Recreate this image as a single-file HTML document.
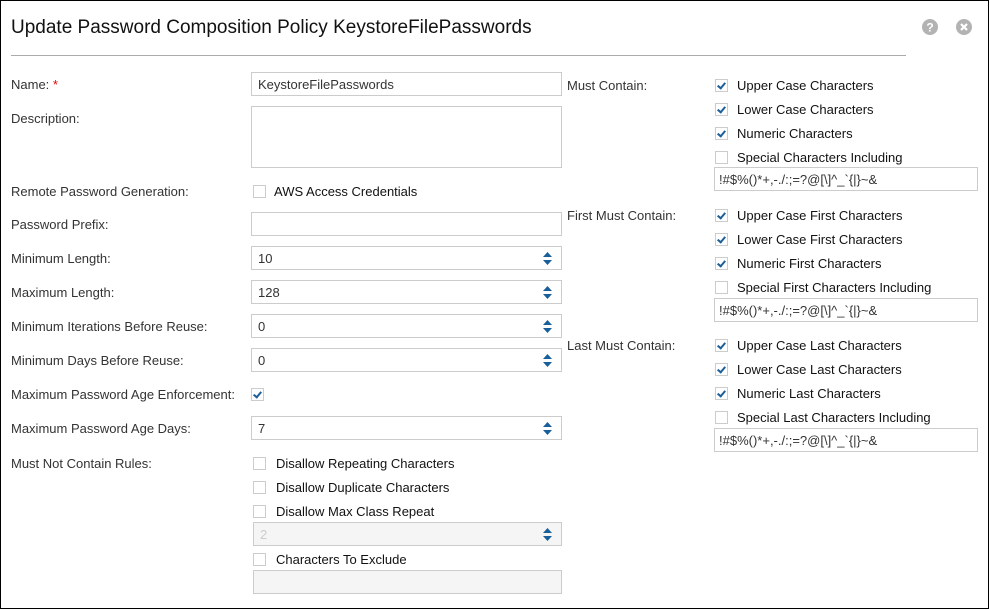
<!DOCTYPE html>
<html><head><meta charset="utf-8"><style>
*{box-sizing:border-box;margin:0;padding:0}
body{width:990px;height:610px;background:#fff;font-family:"Liberation Sans",Arial,sans-serif;font-size:13px;color:#333;position:relative;overflow:hidden}
.frame{position:absolute;left:0;top:0;width:989px;height:609px;border:1px solid #000}
.a{position:absolute}
.t{position:absolute;line-height:16px;height:16px;white-space:nowrap;font-size:13px;margin-top:1px}
.in{position:absolute;border:1px solid #ccc;background:#fff;height:24px;line-height:23px;padding-left:6px;font-size:13px;color:#333}
.cb{position:absolute;width:13px;height:13px;border:1px solid #ccc;background:#fff}
.cb.c::after{content:"";position:absolute;left:3px;top:1px;width:3px;height:6px;border:solid #1a5e9a;border-width:0 2px 2px 0;transform:rotate(40deg)}
.sp{position:absolute;right:9px;top:5px;width:9px;height:13px}
</style></head><body>
<div class="frame"></div>
<div class="t" style="left:11px;top:15px;height:24px;line-height:24px;font-size:19px;color:#111">Update Password Composition Policy KeystoreFilePasswords</div>
<div class="a" style="left:11px;top:55px;width:895px;height:1px;background:#aaa"></div>
<svg class="a" style="left:922px;top:19px" width="16" height="16"><circle cx="8" cy="8" r="8" fill="#b3b3b3"/><text x="8" y="12.5" text-anchor="middle" font-family="Liberation Sans" font-weight="bold" font-size="12" fill="#fff">?</text></svg>
<svg class="a" style="left:956px;top:19px" width="16" height="16"><circle cx="8" cy="8" r="8" fill="#b3b3b3"/><path d="M5 5L11 11M11 5L5 11" stroke="#fff" stroke-width="2.2"/></svg>

<div class="t" style="left:11px;top:76px">Name:<span style="color:#e00"> *</span></div>
<div class="in" style="left:251px;top:72px;width:311px">KeystoreFilePasswords</div>
<div class="t" style="left:11px;top:110px">Description:</div>
<div class="in" style="left:251px;top:106px;width:311px;height:62px"></div>
<div class="t" style="left:11px;top:183px">Remote Password Generation:</div>
<div class="cb" style="left:253px;top:185px"></div>
<div class="t" style="left:274px;top:183px;color:#111">AWS Access Credentials</div>
<div class="t" style="left:11px;top:216px">Password Prefix:</div>
<div class="in" style="left:251px;top:212px;width:311px"></div>

<div class="t" style="left:11px;top:250px">Minimum Length:</div>
<div class="in" style="left:251px;top:246px;width:311px">10<svg class="sp" viewBox="0 0 9 13"><path d="M4.5 0L9 5H0Z M0 8H9L4.5 13Z" fill="#1a5e9a"/></svg></div>
<div class="t" style="left:11px;top:284px">Maximum Length:</div>
<div class="in" style="left:251px;top:280px;width:311px">128<svg class="sp" viewBox="0 0 9 13"><path d="M4.5 0L9 5H0Z M0 8H9L4.5 13Z" fill="#1a5e9a"/></svg></div>
<div class="t" style="left:11px;top:318px">Minimum Iterations Before Reuse:</div>
<div class="in" style="left:251px;top:314px;width:311px">0<svg class="sp" viewBox="0 0 9 13"><path d="M4.5 0L9 5H0Z M0 8H9L4.5 13Z" fill="#1a5e9a"/></svg></div>
<div class="t" style="left:11px;top:352px">Minimum Days Before Reuse:</div>
<div class="in" style="left:251px;top:348px;width:311px">0<svg class="sp" viewBox="0 0 9 13"><path d="M4.5 0L9 5H0Z M0 8H9L4.5 13Z" fill="#1a5e9a"/></svg></div>
<div class="t" style="left:11px;top:386px">Maximum Password Age Enforcement:</div>
<div class="cb c" style="left:251px;top:388px"></div>
<div class="t" style="left:11px;top:420px">Maximum Password Age Days:</div>
<div class="in" style="left:251px;top:416px;width:311px">7<svg class="sp" viewBox="0 0 9 13"><path d="M4.5 0L9 5H0Z M0 8H9L4.5 13Z" fill="#1a5e9a"/></svg></div>
<div class="t" style="left:11px;top:455px">Must Not Contain Rules:</div>
<div class="cb" style="left:253px;top:457px"></div><div class="t" style="left:276px;top:455px;color:#111">Disallow Repeating Characters</div>
<div class="cb" style="left:253px;top:481px"></div><div class="t" style="left:276px;top:479px;color:#111">Disallow Duplicate Characters</div>
<div class="cb" style="left:253px;top:505px"></div><div class="t" style="left:276px;top:503px;color:#111">Disallow Max Class Repeat</div>
<div class="in" style="left:253px;top:522px;width:309px;background:#f5f5f5;color:#ccc">2<svg class="sp" viewBox="0 0 9 13"><path d="M4.5 0L9 5H0Z M0 8H9L4.5 13Z" fill="#1a5e9a"/></svg></div>
<div class="cb" style="left:253px;top:553px"></div><div class="t" style="left:276px;top:551px;color:#111">Characters To Exclude</div>
<div class="in" style="left:253px;top:570px;width:309px;background:#f5f5f5"></div>

<div class="t" style="left:567px;top:77px">Must Contain:</div>
<div class="cb c" style="left:715px;top:79px"></div><div class="t" style="left:737px;top:77px;color:#111">Upper Case Characters</div>
<div class="cb c" style="left:715px;top:103px"></div><div class="t" style="left:737px;top:101px;color:#111">Lower Case Characters</div>
<div class="cb c" style="left:715px;top:127px"></div><div class="t" style="left:737px;top:125px;color:#111">Numeric Characters</div>
<div class="cb" style="left:715px;top:151px"></div><div class="t" style="left:737px;top:149px;color:#111">Special Characters Including</div>
<div class="in" style="left:714px;top:167px;width:264px;padding-left:4px">!#$%()*+,-./:;=?@[\]^_`{|}~&amp;</div>

<div class="t" style="left:567px;top:207px">First Must Contain:</div>
<div class="cb c" style="left:715px;top:209px"></div><div class="t" style="left:737px;top:207px;color:#111">Upper Case First Characters</div>
<div class="cb c" style="left:715px;top:233px"></div><div class="t" style="left:737px;top:231px;color:#111">Lower Case First Characters</div>
<div class="cb c" style="left:715px;top:257px"></div><div class="t" style="left:737px;top:255px;color:#111">Numeric First Characters</div>
<div class="cb" style="left:715px;top:281px"></div><div class="t" style="left:737px;top:279px;color:#111">Special First Characters Including</div>
<div class="in" style="left:714px;top:298px;width:264px;padding-left:4px">!#$%()*+,-./:;=?@[\]^_`{|}~&amp;</div>

<div class="t" style="left:567px;top:337px">Last Must Contain:</div>
<div class="cb c" style="left:715px;top:339px"></div><div class="t" style="left:737px;top:337px;color:#111">Upper Case Last Characters</div>
<div class="cb c" style="left:715px;top:363px"></div><div class="t" style="left:737px;top:361px;color:#111">Lower Case Last Characters</div>
<div class="cb c" style="left:715px;top:387px"></div><div class="t" style="left:737px;top:385px;color:#111">Numeric Last Characters</div>
<div class="cb" style="left:715px;top:411px"></div><div class="t" style="left:737px;top:409px;color:#111">Special Last Characters Including</div>
<div class="in" style="left:714px;top:428px;width:264px;padding-left:4px">!#$%()*+,-./:;=?@[\]^_`{|}~&amp;</div>
</body></html>
